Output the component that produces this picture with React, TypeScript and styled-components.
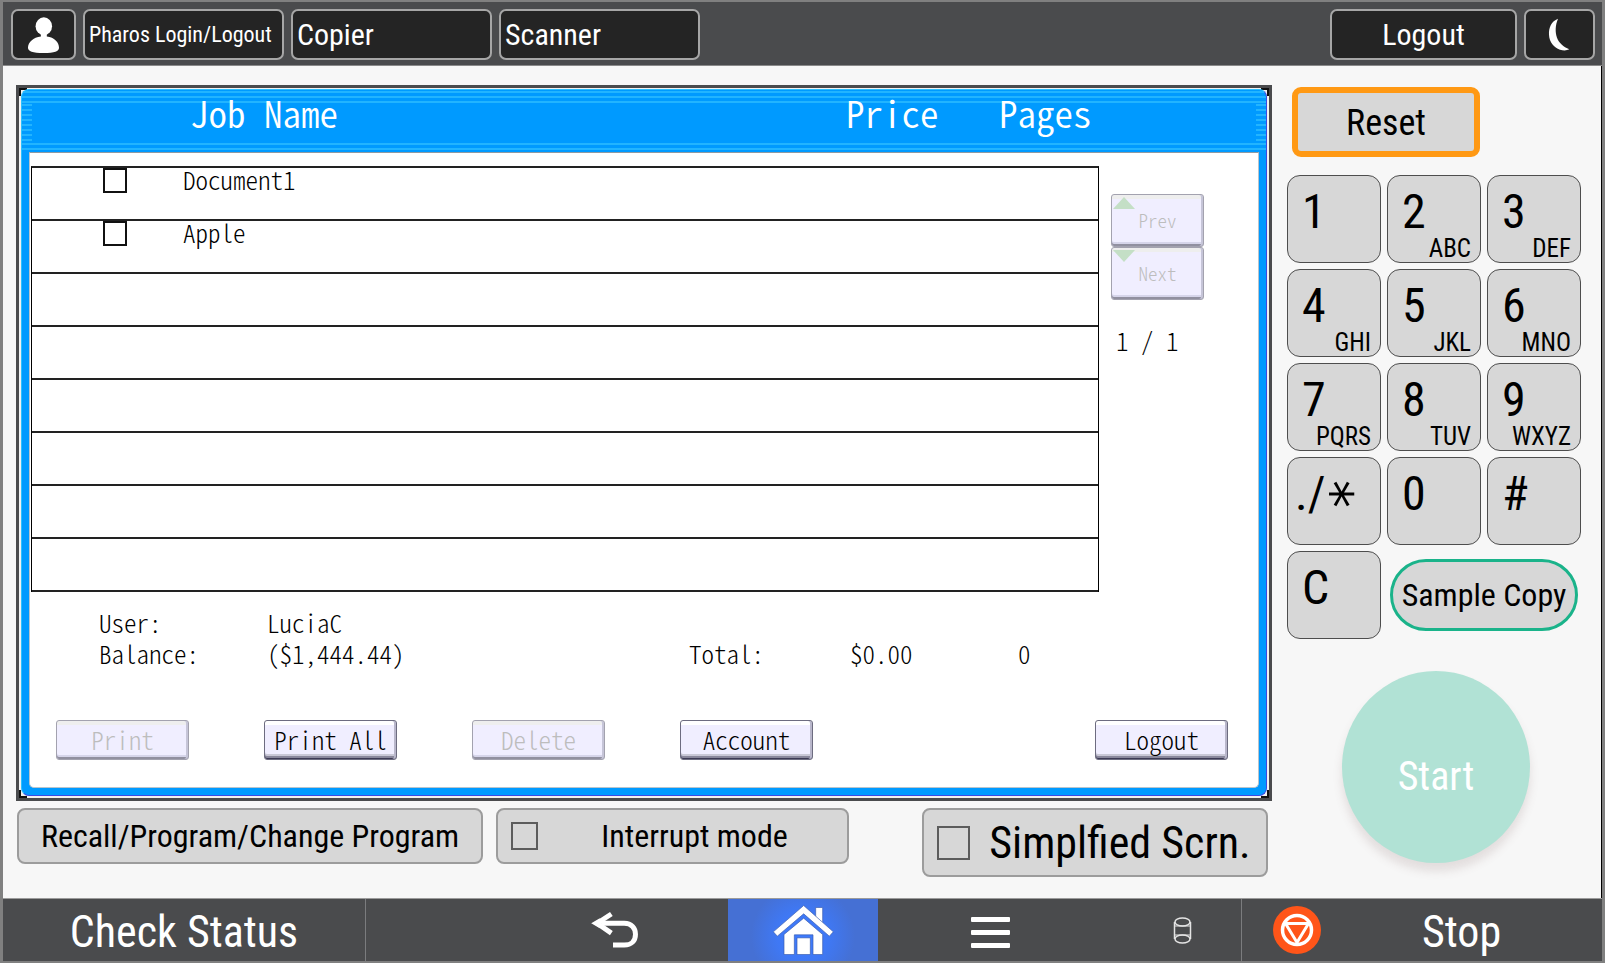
import React from "react";
import styled, { createGlobalStyle, css } from "styled-components";

const UI_FONT = '"Roboto Condensed", Roboto, "Liberation Sans", sans-serif';
const PANEL_FONT = '"Noto Sans CJK JP", "Liberation Mono", monospace';

const GlobalStyle = createGlobalStyle`
  *, *::before, *::after { box-sizing: border-box; }
  body { margin: 0; background: #808080; }
  button, input { font: inherit; color: inherit; margin: 0; }
  button { cursor: pointer; }
`;

const Frame = styled.div`
  min-height: 100vh;
  display: flex;
  flex-direction: column;
  border: 2px solid #808080;
  border-left-width: 3px;
  border-right-width: 3px;
  background: #f7f7f7;
  color: #000;
  font-family: ${UI_FONT};
`;

/* ---------- top bar ---------- */

const TopBar = styled.header`
  display: flex;
  gap: 7px;
  height: 64px;
  padding: 7px 7px 6px 8px;
  background: #4a4b4d;
  border-bottom: 1px solid #8a8a8a;
`;

const TopButton = styled.button<{ $width: number; $size?: number; $centered?: boolean }>`
  display: flex;
  align-items: center;
  justify-content: ${(p) => (p.$centered ? "center" : "flex-start")};
  width: ${(p) => p.$width}px;
  height: 51px;
  padding: 0 4px;
  border: 2px solid #a6a6a6;
  border-radius: 7px;
  background: #242424;
  color: #fff;
  font-size: ${(p) => p.$size ?? 30}px;
  line-height: 32px;
  white-space: nowrap;
`;

const Spacer = styled.div`
  flex: 1;
`;

/* ---------- main area ---------- */

const Main = styled.main`
  flex: 1;
  display: grid;
  grid-template-columns: minmax(0, 1fr) 294px;
  column-gap: 15px;
  padding: 19px 20px 0 13px;
  border-right: 1px solid #000;
`;

const Column = styled.div`
  display: flex;
  flex-direction: column;
`;

const ink = "linear-gradient(#111, #111)";

const Bezel = styled.section`
  padding: 1px 2px 2px;
  border: 3px solid #4a4b4d;
  background:
    ${ink} 0 0 / 8px 2px no-repeat,
    ${ink} 0 0 / 2px 8px no-repeat,
    ${ink} 100% 0 / 8px 2px no-repeat,
    ${ink} 100% 0 / 2px 8px no-repeat,
    ${ink} 0 100% / 8px 2px no-repeat,
    ${ink} 0 100% / 2px 8px no-repeat,
    ${ink} 100% 100% / 8px 2px no-repeat,
    ${ink} 100% 100% / 2px 8px no-repeat,
    #f1f1f1;
`;

const Panel = styled.div`
  border: 1px solid #3b4be2;
  border-top-color: #2cc0ff;
  border-left-color: #2cc0ff;
  border-radius: 8px;
  background: #009aff;
  font-family: ${PANEL_FONT};
  font-weight: 300;
  font-feature-settings: "hwid";
  font-size: 25px;
`;

const stripes = "repeating-linear-gradient(#22b4ff 0 2px, transparent 2px 5px)";

const PanelHeader = styled.div`
  display: grid;
  grid-template-columns: minmax(0, 1fr) 153px 267px;
  height: 62px;
  padding-left: 168px;
  border-radius: 7px 7px 0 0;
  background:
    ${stripes} 0 1px / 100% 12px no-repeat,
    ${stripes} 0 14px / 10px 37px no-repeat,
    ${stripes} 100% 14px / 10px 37px no-repeat,
    ${stripes} 0 53px / 100% 7px no-repeat;
  color: #fff;
  font-size: 37px;
  font-weight: 350;
  line-height: 44px;
`;

const PanelBody = styled.div`
  margin: 0 7px 7px;
  border: 1px solid #b9c4cc;
  border-top-color: #8e9aa3;
  border-radius: 0 0 5px 5px;
  background: #fff;
`;

const JobArea = styled.div`
  display: flex;
  padding: 13px 54px 0 1px;
`;

const JobTable = styled.table`
  flex: 1;
  border-collapse: separate;
  border-spacing: 0;
  border: 1px solid #000;
  border-top: 2px solid #222;
  border-bottom: 0;
  table-layout: fixed;
`;

const JobCell = styled.td<{ $width?: number }>`
  width: ${(p) => (p.$width ? `${p.$width}px` : "auto")};
  height: 53px;
  padding: 0;
  border-bottom: 2px solid #222;
  vertical-align: top;
  line-height: 22px;
`;

const CheckBox = styled.input<{ $w: number; $h: number; $color?: string }>`
  appearance: none;
  flex: none;
  display: block;
  width: ${(p) => p.$w}px;
  height: ${(p) => p.$h}px;
  border: 2px solid ${(p) => p.$color ?? "#5c5c5c"};
  border-radius: 0;
  background: transparent;

  &:checked {
    background: #4c4c4c;
    box-shadow: inset 0 0 0 4px #fff;
  }
`;

const JobCheck = styled(CheckBox)`
  margin-left: 71px;
`;

const Pager = styled.div`
  display: flex;
  flex-direction: column;
  width: 93px;
  margin-left: 12px;
  padding-top: 28px;
`;

const PageCount = styled.div`
  margin-top: 24px;
  padding-left: 5px;
  line-height: 32px;
`;

const keyFace = css`
  border: 1px solid #6d6c80;
  border-radius: 3px;
  background: linear-gradient(#fff 0 4px, #f0eeff 4px);
  box-shadow: inset -2px 0 0 #b9b7cb, inset 0 -1px 0 #3d3b55, inset 0 -3px 0 #8a889c, inset 0 -5px 0 #c9c8d6;
  color: #000;
  font-weight: 300;

  &:disabled {
    border-color: #a3a2af;
    background: linear-gradient(#eee 0 4px, #f0eeff 4px);
    box-shadow: inset -2px 0 0 #c6c5d8, inset 0 -2px 0 #9190a0, inset 0 -4px 0 #d6d5ea;
    color: #bdbdbd;
    cursor: default;
  }
`;

const PagerButton = styled.button`
  ${keyFace}
  position: relative;
  height: 53px;
  padding: 0 0 2px;
  font-size: 19px;
`;

const Arrow = styled.svg`
  position: absolute;
  left: 1px;
  top: 2px;
  width: 22px;
  height: 12px;
  fill: #c4dfc6;
`;

const Summary = styled.dl`
  display: grid;
  grid-template-columns: 168px minmax(0, 1fr) 161px 168px 240px;
  grid-auto-rows: 31px;
  margin: 15px 0 0;
  padding-left: 69px;
  line-height: 31px;
`;

const Term = styled.dt<{ $col: number }>`
  grid-column: ${(p) => p.$col};
`;

const Value = styled.dd<{ $span?: boolean }>`
  margin: 0;
  white-space: nowrap;
  ${(p) => p.$span && "grid-column: 2 / -1;"}
`;

const Actions = styled.div`
  display: flex;
  gap: 75px;
  padding: 51px 30px 27px 26px;
`;

const ActionButton = styled.button<{ $last?: boolean }>`
  ${keyFace}
  width: 133px;
  height: 40px;
  padding: 0 0 2px;
  line-height: 32px;
  white-space: nowrap;
  ${(p) => p.$last && "margin-left: auto;"}
`;

/* ---------- program row ---------- */

const ProgramRow = styled.div`
  display: flex;
  align-items: flex-start;
  gap: 13px;
  padding: 7px 4px 0 1px;
`;

const programFace = css`
  border: 2px solid #9c9c9c;
  border-radius: 8px;
  background: #d7d7d7;
  white-space: nowrap;
`;

const ProgramButton = styled.button`
  ${programFace}
  width: 466px;
  height: 56px;
  padding: 0;
  font-size: 32px;
`;

const ToggleLabel = styled.label<{ $width: number; $height: number; $size: number; $last?: boolean }>`
  ${programFace}
  display: flex;
  align-items: center;
  width: ${(p) => p.$width}px;
  height: ${(p) => p.$height}px;
  padding-left: 13px;
  font-size: ${(p) => p.$size}px;
  ${(p) => p.$last && "margin-left: auto;"}
`;

const ToggleText = styled.span`
  flex: 1;
  padding-left: 4px;
  text-align: center;
`;

/* ---------- hard keys ---------- */

const ResetButton = styled.button`
  width: 188px;
  height: 70px;
  margin: 2px 0 18px 5px;
  padding: 2px 0 0;
  border: 6px solid #ff9914;
  border-radius: 9px;
  background: #d7d7d7;
  font-size: 36px;
`;

const Keypad = styled.div`
  display: grid;
  grid-template-columns: repeat(3, 94px);
  gap: 6px;
`;

const Key = styled.button<{ $inset?: number }>`
  display: flex;
  flex-direction: column;
  height: 88px;
  padding: 8px 9px 0 ${(p) => p.$inset ?? 14}px;
  border: 1px solid #4d4d4d;
  border-radius: 13px;
  background: #d7d7d7;
  text-align: left;
`;

const Digit = styled.span`
  display: flex;
  font-size: 48px;
  line-height: 56px;
`;

const Star = styled.span`
  margin-left: -7px;
  font-family: "DejaVu Sans", sans-serif;
  font-size: 56px;
  font-weight: 400;
  transform: rotate(90deg);
`;

const Letters = styled.span`
  align-self: flex-end;
  font-size: 25px;
  line-height: 18px;
`;

const SampleButton = styled.button`
  grid-column: span 2;
  place-self: center;
  width: 188px;
  height: 72px;
  padding: 0;
  border: 3px solid #1ab38a;
  border-radius: 36px;
  background: #d7d7d7;
  font-size: 32px;
  white-space: nowrap;
`;

const StartButton = styled.button`
  width: 188px;
  height: 192px;
  margin: 32px 0 0 55px;
  padding: 18px 0 0;
  border: 0;
  border-radius: 50%;
  background: #b1e2d5;
  box-shadow: 0 8px 10px rgba(120, 90, 90, 0.16);
  color: #fff;
  font-size: 40px;
`;

/* ---------- bottom navigation ---------- */

const NavBar = styled.nav`
  display: grid;
  grid-template-columns: 363fr 362fr 150fr 363fr 361fr;
  height: 63px;
  border-top: 1px solid #9b9b9b;
  background: #4a4b4d;
`;

const NavCell = styled.div`
  display: flex;
  align-items: stretch;
`;

const NavButton = styled.button<{ $pad?: string; $align?: string; $ruled?: "left" | "right" }>`
  flex: 1;
  display: flex;
  align-items: center;
  justify-content: ${(p) => p.$align ?? "center"};
  padding: ${(p) => p.$pad ?? "0"};
  border: 0;
  ${(p) => p.$ruled && `border-${p.$ruled}: 1px solid #7b7c7e;`}
  background: transparent;
  color: #fff;
  font-size: 44px;
  white-space: nowrap;
`;

const HomeButton = styled(NavButton)`
  background: radial-gradient(circle at 50% 60%, #3d7bff 0, #3f78f4 26px, #4570d4 52px);
`;

const StopLabel = styled.span`
  flex: 1;
  padding-top: 4px;
  text-align: center;
`;

/* ---------- icons ---------- */

const UserIcon = () => (
  <svg width="33" height="38" viewBox="80 45 100 113" fill="#fff" aria-hidden="true">
    <ellipse cx="131" cy="75" rx="25" ry="27" />
    <path d="M122 96 H140 V106 C163 108 177 124 177 140 C177 151 164 156 130 156 C97 156 83 151 83 140 C83 124 99 108 122 106 Z" />
  </svg>
);

const MoonIcon = () => (
  <svg width="24" height="36" viewBox="862 49 72 108" fill="#fff" aria-hidden="true">
    <path d="M892 54 C872 62 864 80 865 102 C866 124 880 141 898 147 C908 150 918 150 926 146 C908 138 895 127 889 111 C883 94 884 73 892 54 Z" />
  </svg>
);

const BackIcon = () => (
  <svg width="50" height="38" viewBox="33 60 150 115" fill="none" stroke="#fff" strokeWidth="15" aria-hidden="true">
    <path d="M66 97 H136 C158 97 170 112 170 130 C170 150 158 163 136 163 H102" />
    <path d="M97 69 L54 97 L97 127" />
    <path d="M36 97 L62 82 V112 Z" fill="#fff" stroke="none" />
  </svg>
);

const HomeIcon = () => (
  <svg width="62" height="52" viewBox="575 42 186 155" fill="#fff" stroke="#3a5cae" strokeWidth="2" aria-hidden="true">
    <path d="M706 52 H727 V102 L706 82 Z" />
    <path d="M670 46 L759 125 L747 138 L670 71 L591 138 L579 125 Z" />
    <path d="M670 84 L727 133 V193 H698 V134 H642 V193 H611 V133 Z" />
    <path d="M650 143 H690 V193 H650 Z" />
  </svg>
);

const MenuIcon = () => (
  <svg width="39" height="31" viewBox="0 0 39 31" fill="#fff" aria-hidden="true">
    <rect width="39" height="5" rx="1" />
    <rect y="13" width="39" height="5" rx="1" />
    <rect y="26" width="39" height="5" rx="1" />
  </svg>
);

const DiskIcon = () => (
  <svg width="19" height="27" viewBox="0 0 19 27" fill="none" stroke="#e4e4e4" strokeWidth="1.5" aria-hidden="true">
    <ellipse cx="9.5" cy="5" rx="7.5" ry="4" />
    <ellipse cx="9.5" cy="22" rx="7.5" ry="4" />
    <path d="M1.5 5 V22 M17.5 5 V22" />
    <path d="M2 9 H17 M2 18 H17" strokeWidth="1" />
  </svg>
);

const StopIcon = () => (
  <svg width="48" height="48" viewBox="0 0 48 48" fill="none" aria-hidden="true">
    <circle cx="24" cy="24" r="24" fill="#ff5519" />
    <circle cx="24" cy="24" r="14.5" stroke="#fff" strokeWidth="3.5" />
    <path d="M12.5 17.5 H35.5 L24 36.5 Z" stroke="#fff" strokeWidth="3" strokeLinejoin="round" />
  </svg>
);

/* ---------- data ---------- */

const jobs = ["Document1", "Apple", "", "", "", "", "", ""];

const keys = [
  { digit: "1", letters: "" },
  { digit: "2", letters: "ABC" },
  { digit: "3", letters: "DEF" },
  { digit: "4", letters: "GHI" },
  { digit: "5", letters: "JKL" },
  { digit: "6", letters: "MNO" },
  { digit: "7", letters: "PQRS" },
  { digit: "8", letters: "TUV" },
  { digit: "9", letters: "WXYZ" },
];

export default function App() {
  return (
    <>
      <GlobalStyle />
      <Frame>
        <TopBar>
          <TopButton $width={65} $centered aria-label="User">
            <UserIcon />
          </TopButton>
          <TopButton $width={201} $size={22}>Pharos Login/Logout</TopButton>
          <TopButton $width={201}>Copier</TopButton>
          <TopButton $width={201}>Scanner</TopButton>
          <Spacer />
          <TopButton $width={187} $centered>Logout</TopButton>
          <TopButton $width={71} $centered aria-label="Energy saver">
            <MoonIcon />
          </TopButton>
        </TopBar>

        <Main>
          <Column>
            <Bezel>
              <Panel>
                <PanelHeader>
                  <span>Job Name</span>
                  <span>Price</span>
                  <span>Pages</span>
                </PanelHeader>
                <PanelBody>
                  <JobArea>
                    <JobTable aria-label="Jobs">
                      <tbody>
                        {jobs.map((name, i) => (
                          <tr key={i}>
                            <JobCell $width={151}>
                              {name && (
                                <JobCheck type="checkbox" $w={24} $h={25} $color="#111" aria-label={name} />
                              )}
                            </JobCell>
                            <JobCell>{name}</JobCell>
                          </tr>
                        ))}
                      </tbody>
                    </JobTable>
                    <Pager>
                      <PagerButton disabled>
                        <Arrow viewBox="0 0 22 12" aria-hidden="true">
                          <path d="M11 0 L22 12 H0 Z" />
                        </Arrow>
                        Prev
                      </PagerButton>
                      <PagerButton disabled>
                        <Arrow viewBox="0 0 22 12" aria-hidden="true">
                          <path d="M0 0 H22 L11 12 Z" />
                        </Arrow>
                        Next
                      </PagerButton>
                      <PageCount>1 / 1</PageCount>
                    </Pager>
                  </JobArea>

                  <Summary>
                    <Term $col={1}>User:</Term>
                    <Value $span>LuciaC</Value>
                    <Term $col={1}>Balance:</Term>
                    <Value>($1,444.44)</Value>
                    <Term $col={3}>Total:</Term>
                    <Value>$0.00</Value>
                    <Value>0</Value>
                  </Summary>

                  <Actions>
                    <ActionButton disabled>Print</ActionButton>
                    <ActionButton>Print All</ActionButton>
                    <ActionButton disabled>Delete</ActionButton>
                    <ActionButton>Account</ActionButton>
                    <ActionButton $last>Logout</ActionButton>
                  </Actions>
                </PanelBody>
              </Panel>
            </Bezel>

            <ProgramRow>
              <ProgramButton>Recall/Program/Change Program</ProgramButton>
              <ToggleLabel $width={353} $height={56} $size={32}>
                <CheckBox type="checkbox" $w={27} $h={28} />
                <ToggleText>Interrupt mode</ToggleText>
              </ToggleLabel>
              <ToggleLabel $width={346} $height={69} $size={44} $last>
                <CheckBox type="checkbox" $w={33} $h={34} />
                <ToggleText>Simplfied Scrn.</ToggleText>
              </ToggleLabel>
            </ProgramRow>
          </Column>

          <Column>
            <ResetButton>Reset</ResetButton>
            <Keypad>
              {keys.map((k) => (
                <Key key={k.digit}>
                  <Digit>{k.digit}</Digit>
                  <Letters>{k.letters}</Letters>
                </Key>
              ))}
              <Key $inset={7}>
                <Digit>
                  ./<Star>*</Star>
                </Digit>
              </Key>
              <Key>
                <Digit>0</Digit>
              </Key>
              <Key>
                <Digit>#</Digit>
              </Key>
              <Key>
                <Digit>C</Digit>
              </Key>
              <SampleButton>Sample Copy</SampleButton>
            </Keypad>
            <StartButton>Start</StartButton>
          </Column>
        </Main>

        <NavBar>
          <NavCell>
            <NavButton $ruled="right" $pad="4px 0 0">Check Status</NavButton>
          </NavCell>
          <NavCell>
            <NavButton $align="flex-end" $pad="0 88px 0 0" aria-label="Back">
              <BackIcon />
            </NavButton>
          </NavCell>
          <NavCell>
            <HomeButton aria-label="Home">
              <HomeIcon />
            </HomeButton>
          </NavCell>
          <NavCell>
            <NavButton $align="flex-start" $pad="4px 0 0 93px" aria-label="Menu">
              <MenuIcon />
            </NavButton>
            <NavButton $align="flex-end" $pad="0 49px 0 0" aria-label="Storage">
              <DiskIcon />
            </NavButton>
          </NavCell>
          <NavCell>
            <NavButton $ruled="left" $pad="0 0 0 31px">
              <StopIcon />
              <StopLabel>Stop</StopLabel>
            </NavButton>
          </NavCell>
        </NavBar>
      </Frame>
    </>
  );
}
